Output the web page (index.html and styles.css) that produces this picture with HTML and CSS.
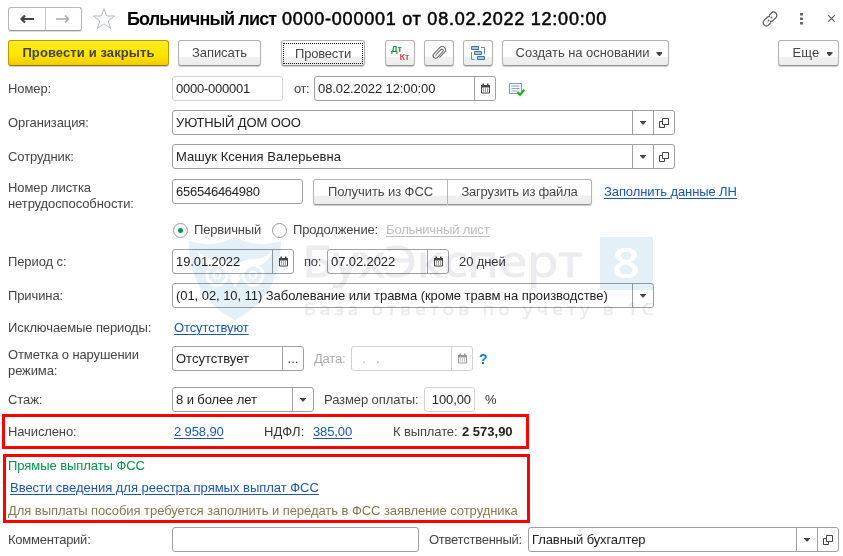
FILE: index.html
```html
<!DOCTYPE html>
<html lang="ru">
<head>
<meta charset="utf-8">
<title>Больничный лист</title>
<link rel="stylesheet" href="styles.css">
</head>
<body>
<svg class="defs" width="0" height="0">
  <symbol id="calendar" viewBox="0 0 11 11"><path d="M1.500 2.500h8v7.500h-8z" fill="#fff" stroke="currentColor"/><path d="M1 2h9v2.500H1zM2.500 .5h1.500v2H2.500zM7 .5h1.500v2H7z" fill="currentColor"/><path d="M3 6h1M5 6h1M7 6h1M3 8h1M5 8h1M7 8h1" stroke="currentColor"/></symbol>
  <symbol id="open" viewBox="0 0 10 10"><path d="M3.500.5h6v6h-6zM3 3.500H.5v6h5V7" fill="none" stroke="currentColor"/></symbol>
</svg>
<main class="window">
  <header class="title-bar">
    <div class="history">
      <span><svg width="16" height="10" viewBox="0 0 16 10"><path d="M2 5h13M6 1.500 2.500 5 6 8.500" fill="none" stroke="#444" stroke-width="2.200"/></svg></span>
      <span><svg width="16" height="10" viewBox="0 0 16 10"><path d="M1 5h13M10 1.500l3.500 3.500L10 8.500" fill="none" stroke="#aaa" stroke-width="1.600"/></svg></span>
    </div>
    <svg class="star" width="24" height="23" viewBox="0 0 24 23"><path d="M12 1.500l2.700 7.500h8l-6.400 4.800 2.400 7.700L12 16.800l-6.700 4.700 2.400-7.700L1.300 9h8z" fill="none" stroke="#b4bcc4"/></svg>
    <h1><span class="doc-name">Больничный лист</span><span class="doc-number">0000-000001 от 08.02.2022 12:00:00</span></h1>
    <div class="window-tools">
      <svg width="16" height="16" viewBox="0 0 16 16"><g fill="none" stroke="#555" stroke-width="1.200"><path d="M7 4.500l2.300-2.400a3.200 3.200 0 0 1 4.600 4.600L11 9.500a3 3 0 0 1-3 .8M9 11.500l-2.300 2.400a3.200 3.200 0 0 1-4.600-4.600L5 6.500a3 3 0 0 1 3-.8M5.700 10.300l1.600-1.600M8.700 7.300l1.600-1.600"/></g></svg>
      <svg width="3" height="12" viewBox="0 0 3 12"><path d="M0 0h3v2.500H0zM0 4.500h3V7H0zM0 9h3v2.500H0z" fill="#666"/></svg>
      <svg width="7" height="7" viewBox="0 0 7 7"><path d="M.3.3l6.400 6.400M6.700.3L.3 6.700" stroke="#555" stroke-width="1.100"/></svg>
    </div>
  </header>

  <nav class="toolbar">
    <div class="btn primary">Провести и закрыть</div>
    <div class="btn save">Записать</div>
    <div class="btn post"><span class="focus">Провести</span></div>
    <div class="btn icon dtkt"><span class="dt">Дт</span><span class="kt">Кт</span></div>
    <div class="btn icon"><svg width="14" height="16" viewBox="0 0 14 16"><path d="M3.500 10.500L8.800 4.700a1.300 1.300 0 0 1 2 1.800L5.500 12.400a2.500 2.500 0 0 1-3.800-3.300L8 2.300a3.300 3.300 0 0 1 4.800 4.500L7.500 12.500" fill="none" stroke="#666" stroke-width="1.100"/></svg></div>
    <div class="btn icon"><svg width="16" height="15" viewBox="0 0 16 15"><g fill="#a5c5e0" stroke="#3f74a3"><path d="M1.500 .5h7v3h-7zM4.500 5.500h7v3h-7zM7.500 10.500h7v3h-7z"/></g><path d="M11 1.500h3.500V8M4.500 13.500h-3V6" fill="none" stroke="#5f8db5"/></svg></div>
    <div class="btn create">Создать на основании<i class="caret"></i></div>
    <div class="btn more">Еще<i class="caret"></i></div>
  </nav>

  <section class="form">
    <div class="row">
      <span class="label">Номер:</span>
      <div class="field number light"><span>0000-000001</span></div>
      <span class="gap-label ot">от:</span>
      <div class="field datetime"><span>08.02.2022 12:00:00</span><b><svg width="11" height="11"><use href="#calendar"/></svg></b></div>
      <svg class="status" width="17" height="14" viewBox="0 0 17 14"><path d="M.5.5h12v10H.5z" fill="#f6f9fc" stroke="#8799ab"/><path d="M2.500 3h8M2.500 5.500h8M2.500 8h6" stroke="#8da6bd"/><path d="M8.500 9l2.500 2.800 4.300-5" fill="none" stroke="#22b422" stroke-width="2.400"/></svg>
    </div>
    <div class="row">
      <span class="label">Организация:</span>
      <div class="field wide"><span>УЮТНЫЙ ДОМ ООО</span><b><i class="caret"></i></b><b><svg width="10" height="10"><use href="#open"/></svg></b></div>
    </div>
    <div class="row">
      <span class="label">Сотрудник:</span>
      <div class="field wide employee"><span>Машук Ксения Валерьевна</span><b><i class="caret"></i></b><b><svg width="10" height="10"><use href="#open"/></svg></b></div>
    </div>
    <div class="row sheet-row">
      <span class="label two-line">Номер листка<br>нетрудоспособности:</span>
      <div class="field sheet"><span>656546464980</span></div>
      <div class="btn-group"><div class="btn">Получить из ФСС</div><div class="btn">Загрузить из файла</div></div>
      <a class="fill-link">Заполнить данные ЛН</a>
    </div>
    <div class="row radio-row">
      <span class="label"></span>
      <i class="radio on"></i><span class="first">Первичный</span>
      <i class="radio"></i><span class="next">Продолжение:</span>
      <a class="muted">Больничный лист</a>
    </div>
    <div class="row period-row">
      <span class="label">Период с:</span>
      <div class="field date"><span>19.01.2022</span><b><svg width="11" height="11"><use href="#calendar"/></svg></b></div>
      <span class="gap-label po">по:</span>
      <div class="field date"><span>07.02.2022</span><b><svg width="11" height="11"><use href="#calendar"/></svg></b></div>
      <span class="days">20 дней</span>
    </div>
    <div class="row">
      <span class="label">Причина:</span>
      <div class="field reason"><span>(01, 02, 10, 11) Заболевание или травма (кроме травм на производстве)</span><b><i class="caret"></i></b></div>
    </div>
    <div class="row excluded-row">
      <span class="label">Исключаемые периоды:</span>
      <a class="none-link">Отсутствуют</a>
    </div>
    <div class="row mark-row">
      <span class="label two-line">Отметка о нарушении<br>режима:</span>
      <div class="field mark"><span>Отсутствует</span><b>...</b></div>
      <span class="gap-label disabled date-label">Дата:</span>
      <div class="field date light disabled"><span>&nbsp; .&nbsp;&nbsp; .</span><b><svg width="11" height="11"><use href="#calendar"/></svg></b></div>
      <span class="help">?</span>
    </div>
    <div class="row exp-row">
      <span class="label">Стаж:</span>
      <div class="field exp"><span>8 и более лет</span><b><i class="caret"></i></b></div>
      <span class="gap-label pay-label">Размер оплаты:</span>
      <div class="field percent light"><span>100,00</span></div>
      <span class="percent-sign">%</span>
    </div>
  </section>

  <section class="frame totals">
    <span class="accrued">Начислено:</span><a class="sum">2 958,90</a>
    <span class="tax">НДФЛ:</span><a class="tax-sum">385,00</a>
    <span class="due">К выплате:</span><strong>2 573,90</strong>
  </section>

  <section class="frame direct">
    <p class="green">Прямые выплаты ФСС</p>
    <p class="entry"><a>Ввести сведения для реестра прямых выплат ФСС</a></p>
    <p class="note">Для выплаты пособия требуется заполнить и передать в ФСС заявление сотрудника</p>
  </section>

  <footer class="row footer">
    <span class="label">Комментарий:</span>
    <div class="field comment"><span></span></div>
    <span class="gap-label resp-label">Ответственный:</span>
    <div class="field resp"><span>Главный бухгалтер</span><b><i class="caret"></i></b><b><svg width="10" height="10"><use href="#open"/></svg></b></div>
  </footer>

  <svg class="watermark" width="470" height="90" viewBox="0 0 470 90">
    <path d="M0 5Q24 13 46 1Q68 13 92 5C91 45 76 68 46 84C16 68 1 45 0 5z" fill="#e3f0f8"/>
    <path d="M9 15Q17 24 30 23Q41 24 46 32Q51 24 62 23Q75 24 83 15Q80 27 70 29Q54 29 46 47Q38 29 22 29Q12 27 9 15z" fill="#fff"/>
    <g fill="none" stroke="#fff" stroke-width="3"><circle cx="28" cy="39" r="10"/><circle cx="64" cy="39" r="10"/><circle cx="28" cy="39" r="3.500" stroke-width="2"/><circle cx="64" cy="39" r="3.500" stroke-width="2"/></g>
    <path d="M40 41l6 11 6-11z" fill="#fff"/>
    <g fill="#ebebf0"><text class="brand" x="113" y="41" textLength="280" lengthAdjust="spacingAndGlyphs">БухЭксперт</text><text class="slogan" transform="translate(115 79) scale(1.150 1)" textLength="304">База ответов по учету в 1С</text></g>
    <path d="M411 1h53v53h-53z" fill="#e3f0f8"/>
    <text class="eight" x="423" y="42" textLength="28" lengthAdjust="spacingAndGlyphs">8</text>
  </svg>
</main>
</body>
</html>
```
FILE: styles.css
```css
* { box-sizing: border-box; }
body { margin: 0; background: #fff; color: #444; font: 13px/16px "Liberation Sans", Arial, sans-serif; letter-spacing: -.1px; }
.window { position: relative; width: 843px; height: 556px; overflow: hidden; padding: 6px 4px 0 8px; white-space: nowrap; }
.defs { position: absolute; }
.window svg { flex: none; }
p { margin: 0; }
a { color: #1a56b0; text-decoration: underline; text-underline-offset: 2px; text-decoration-thickness: 1px; }

.title-bar { display: flex; align-items: center; height: 25px; }
.history { display: flex; width: 74px; height: 24px; border: 1px solid #b5b5b5; border-bottom-color: #999; border-radius: 3px; box-shadow: 0 1px #ddd; }
.history span { flex: 1; display: flex; align-items: center; justify-content: center; }
.history span + span { border-left: 1px solid #ccc; }
.star { margin-left: 10px; }
h1 { display: flex; gap: 6px; margin: 0 0 0 11px; color: #000; font-size: 18px; line-height: 24px; }
.doc-name { width: 149px; letter-spacing: -.85px; }
.doc-number { font-weight: 400; letter-spacing: .76px; -webkit-text-stroke: .5px #000; }
.window-tools { display: flex; align-items: center; gap: 22px; margin: 0 4px 0 auto; }
.window-tools svg:last-child { margin-left: 3px; }

.toolbar { display: flex; height: 26px; margin-top: 9px; }
.btn { display: flex; align-items: center; justify-content: center; height: 26px; border: 1px solid #b3b3b3; border-bottom: 1px solid #959595; border-radius: 3px; background: linear-gradient(#fff 64%, #f0f0f0 66%, #ececec); box-shadow: 0 1px 1px #ccc; letter-spacing: -.05px; }
.primary { width: 161px; background: linear-gradient(#ffe924, #ffe600 55%, #f1cb00); border-color: #b89b00; border-bottom-color: #937c00; font-weight: 700; letter-spacing: .1px; }
.save { width: 83px; margin-left: 9px; }
.post { width: 84px; margin-left: 20px; padding: 1px; }
.focus { flex: 1; height: 21px; border: 1px dotted #111; line-height: 20px; text-align: center; letter-spacing: -.2px; }
.icon { width: 30px; margin-left: 9px; }
.dtkt { flex-direction: column; margin-left: 20px; font-size: 9px; line-height: 8px; font-weight: 700; }
.dt { margin-right: 7px; color: #17924b; }
.kt { margin-left: 9px; color: #df4c4c; }
.create { width: 167px; margin-left: 9px; padding-left: 7px; }
.more { width: 61px; margin-left: auto; padding-left: 8px; letter-spacing: .2px; }
.btn .caret { margin: 2px 0 0 7px; }
.caret { display: block; width: 6px; height: 4px; background: #444; clip-path: polygon(0 0, 100% 0, 100% 25%, 58% 100%, 42% 100%, 0 25%); }

.form { display: flex; flex-direction: column; gap: 9px; margin-top: 10px; }
.row { display: flex; align-items: center; height: 25px; }
.label { flex: none; width: 164px; }
.field { display: flex; height: 25px; border: 1px solid #a0a0a0; border-radius: 3px; color: #222; }
.field span { flex: 1; padding-left: 3px; line-height: 23px; }
.field b { display: flex; align-items: center; justify-content: center; width: 21px; border-left: 1px solid #a0a0a0; color: #444; font-weight: 400; }
.field.light { border-color: #d2d2d2; }
.number { width: 111px; letter-spacing: -.25px; }
.gap-label { flex: none; }
.ot { width: 31px; padding-left: 11px; letter-spacing: -.5px; }
.datetime { width: 182px; }
.status { margin: 2px 0 0 13px; }
.wide { width: 503px; }
.employee { letter-spacing: .04px; }
.sheet-row { height: 27px; }
.sheet-row .label { padding-top: 8px; }
.sheet { width: 131px; letter-spacing: -.25px; }
.btn-group { display: flex; width: 279px; margin-left: 10px; }
.btn-group .btn { flex: none; width: 135px; border-radius: 3px 0 0 3px; letter-spacing: -.08px; }
.btn-group .btn + .btn { width: 144px; border-left: 0; border-radius: 0 3px 3px 0; letter-spacing: -.2px; }
.fill-link { margin-left: 12px; }
.radio-row { height: 16px; margin-top: 8px; letter-spacing: -.15px; }
.radio { flex: none; display: flex; width: 15px; height: 15px; margin-left: 1px; border: 1px solid #999; border-radius: 50%; background: #fff; }
.radio.on::after { content: ""; width: 5px; height: 5px; margin: 4px; border-radius: 50%; background: #009646; }
.first { width: 77px; margin-left: 6px; }
.next { width: 93px; margin-left: 6px; }
.muted { color: #bdbdbd; }
.period-row { margin-top: 2px; }
.date { width: 122px; }
.po { width: 33px; padding-left: 10px; letter-spacing: -.3px; }
.days { margin-left: 10px; color: #333; }
.reason { width: 482px; letter-spacing: -.06px; }
.excluded-row { height: 16px; margin-top: 3px; }
.none-link { margin-left: 2px; }
.mark-row { margin-top: 1px; }
.mark-row .label { padding-top: 8px; }
.mark { width: 132px; letter-spacing: 0; }
.date-label { width: 47px; padding-left: 10px; letter-spacing: -.2px; }
.disabled, .disabled span { color: #aaa; }
.disabled b { border-color: #d2d2d2; color: #999; }
.help { margin-left: 6px; color: #087cc1; font-size: 14px; font-weight: 700; }
.exp-row { margin-top: 7px; }
.exp { width: 142px; }
.pay-label { width: 110px; padding-left: 10px; }
.percent { width: 51px; text-align: right; }
.percent span { padding-right: 3px; }
.percent-sign { margin-left: 10px; color: #333; }

.frame { border: 3px solid #f00; }
.totals { display: flex; align-items: center; width: 527px; height: 35px; margin: 2px 0 0 -6px; padding-left: 3px; letter-spacing: -.12px; }
.accrued { width: 166px; }
.sum { width: 50px; }
.tax { width: 49px; margin-left: 40px; letter-spacing: .2px; color: #333; }
.tax-sum { width: 39px; }
.due { width: 69px; margin-left: 41px; }
strong { color: #222; letter-spacing: 0; }
.direct { width: 527px; height: 69px; margin: 5px 0 0 -5px; padding: 1px 0 0 2px; letter-spacing: -.06px; }
.green { color: #009646; line-height: 16px; }
.entry { margin: 6px 0 0 2px; letter-spacing: -.02px; }
.note { margin-top: 7px; color: #85794f; }
.footer { margin-top: 4px; }
.comment { width: 247px; }
.footer .label, .resp-label { letter-spacing: -.25px; }
.resp-label { width: 109px; padding-left: 10px; }
.resp { width: 311px; }

.watermark { position: absolute; left: 189px; top: 236px; mix-blend-mode: multiply; pointer-events: none; }
.brand { font: 43px "Open Sans", sans-serif; stroke: #ebebf0; stroke-width: .8px; }
.slogan { font: 16.500px "Open Sans", sans-serif; stroke: #ebebf0; stroke-width: .5px; }
.eight { font: 600 41px "Open Sans", sans-serif; fill: #fff; }
```
